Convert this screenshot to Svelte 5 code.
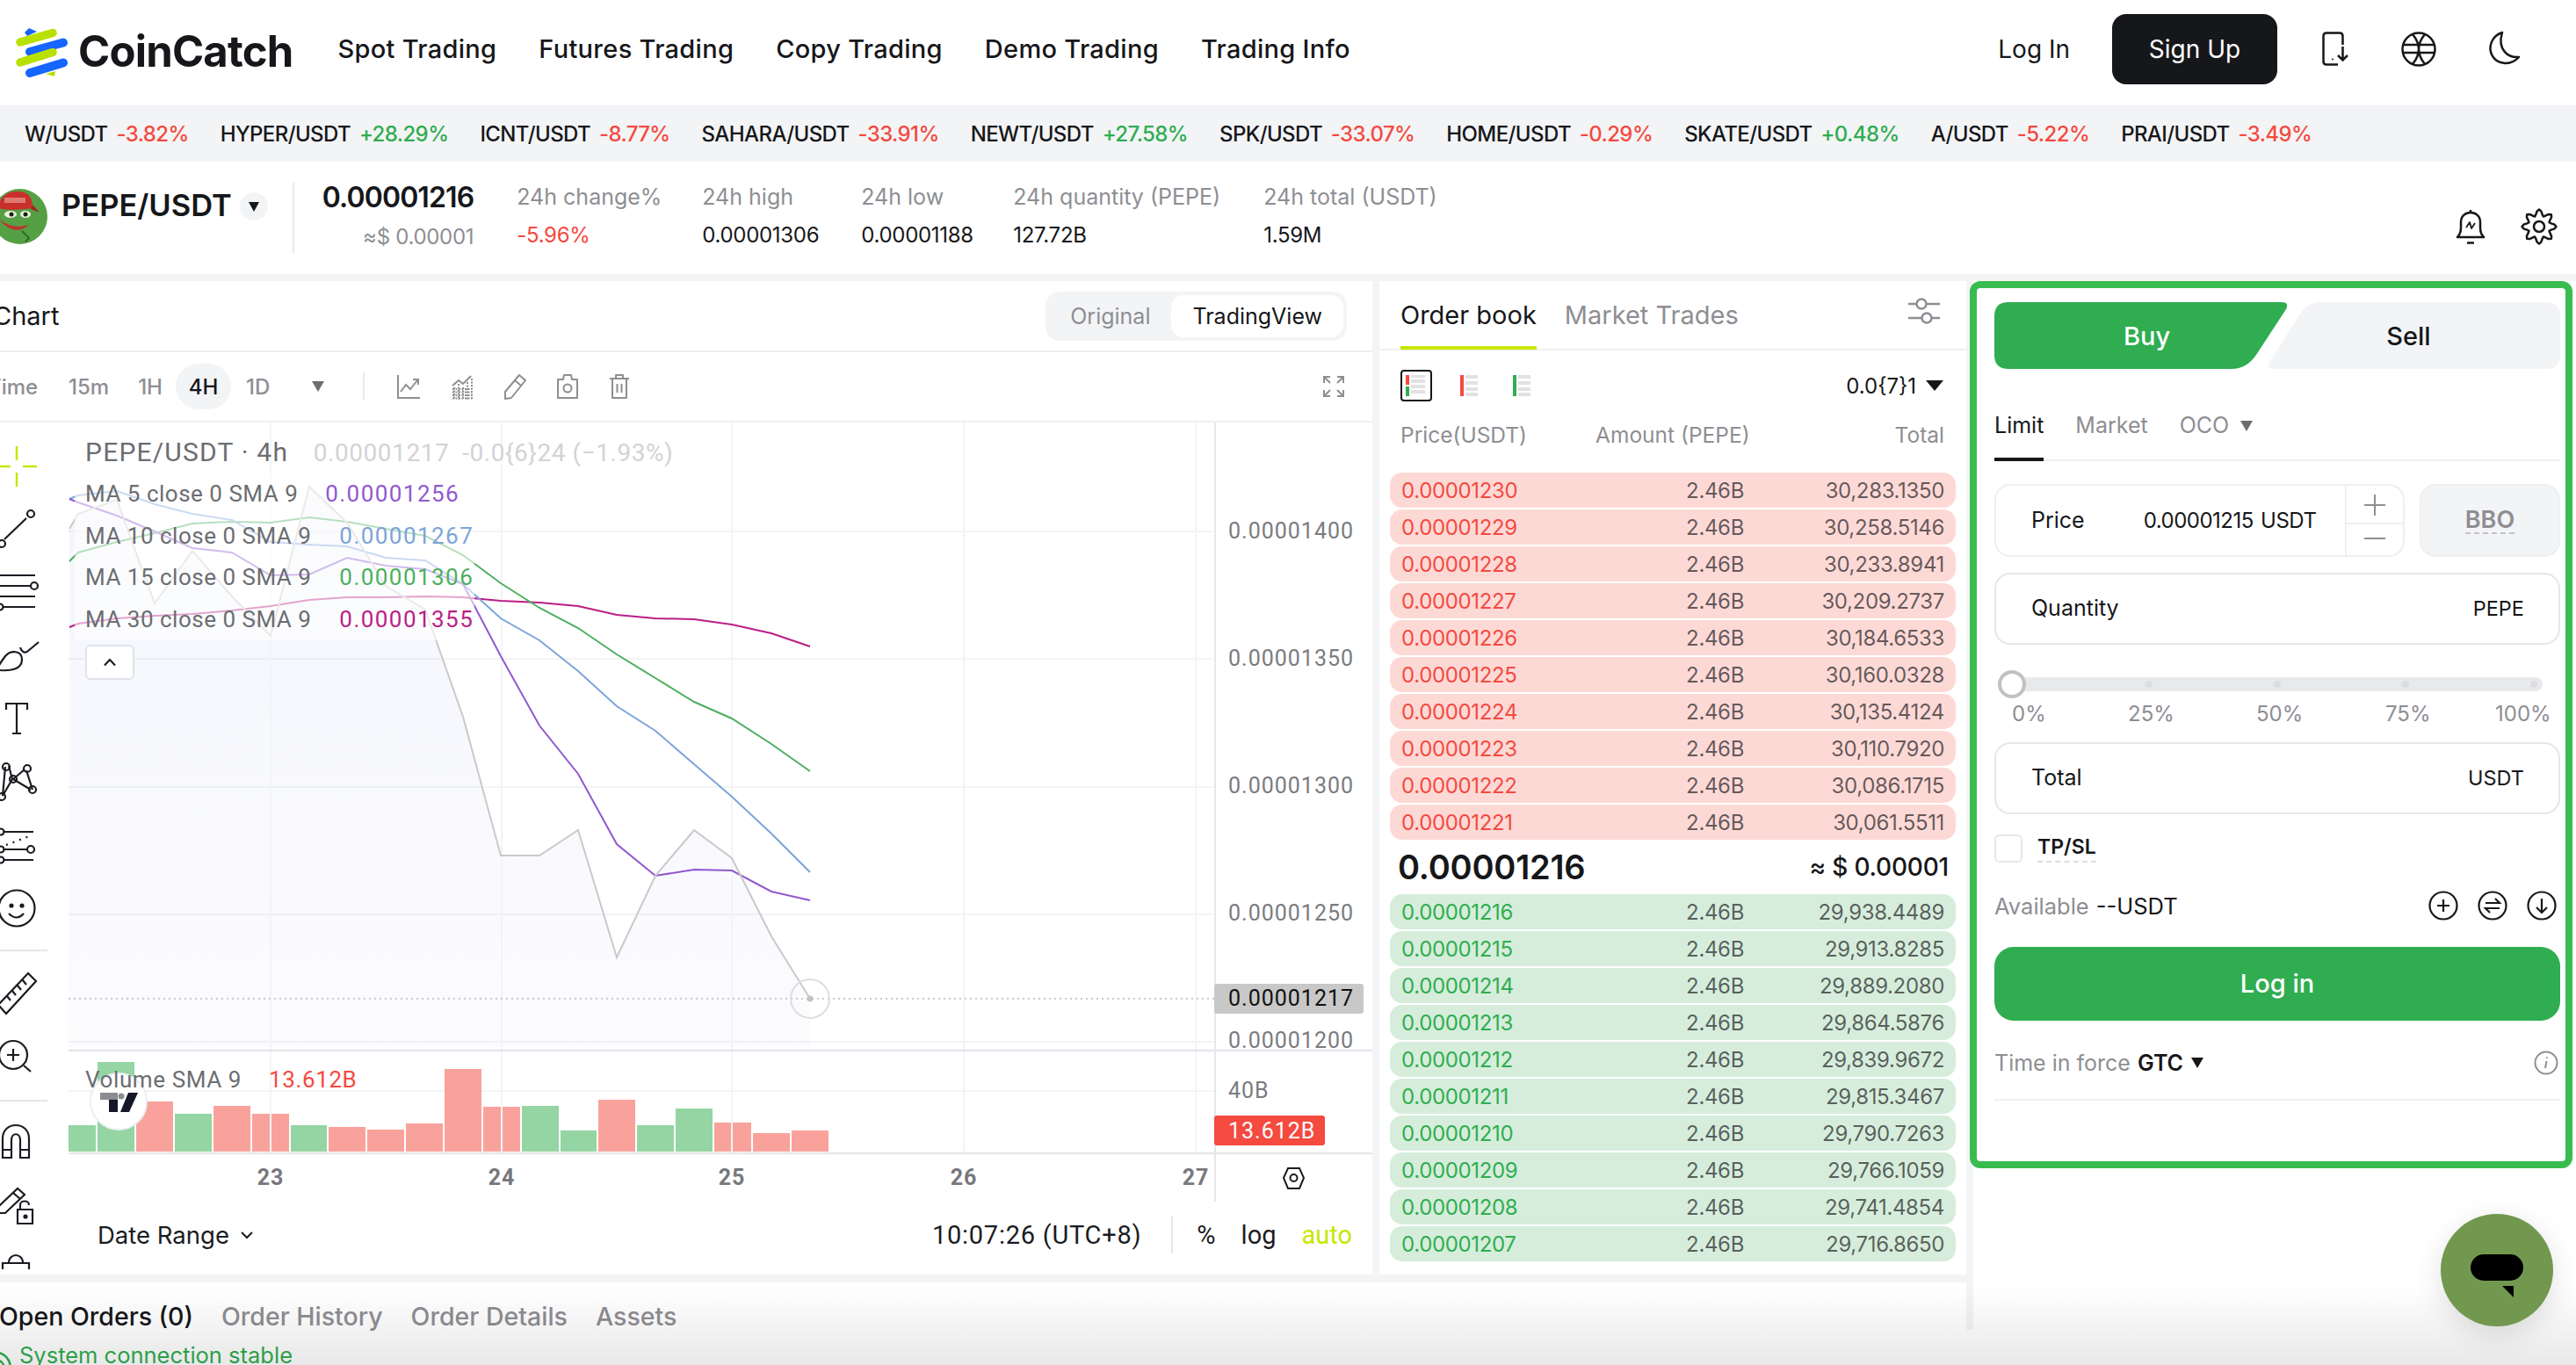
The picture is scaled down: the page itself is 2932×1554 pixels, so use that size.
<script>
  const nav = ['Spot Trading', 'Futures Trading', 'Copy Trading', 'Demo Trading', 'Trading Info']

  const ticker = [
    ['W/USDT', '-3.82%'], ['HYPER/USDT', '+28.29%'], ['ICNT/USDT', '-8.77%'], ['SAHARA/USDT', '-33.91%'],
    ['NEWT/USDT', '+27.58%'], ['SPK/USDT', '-33.07%'], ['HOME/USDT', '-0.29%'], ['SKATE/USDT', '+0.48%'],
    ['A/USDT', '-5.22%'], ['PRAI/USDT', '-3.49%']
  ]

  const stats = [
    { label: '24h high', value: '0.00001306', w: 181 },
    { label: '24h low', value: '0.00001188', w: 173 },
    { label: '24h quantity (PEPE)', value: '127.72B', w: 285 },
    { label: '24h total (USDT)', value: '1.59M', w: 200 }
  ]

  const asks = [
    ['0.00001230', '30,283.1350'], ['0.00001229', '30,258.5146'], ['0.00001228', '30,233.8941'],
    ['0.00001227', '30,209.2737'], ['0.00001226', '30,184.6533'], ['0.00001225', '30,160.0328'],
    ['0.00001224', '30,135.4124'], ['0.00001223', '30,110.7920'], ['0.00001222', '30,086.1715'],
    ['0.00001221', '30,061.5511']
  ]
  const bids = [
    ['0.00001216', '29,938.4489'], ['0.00001215', '29,913.8285'], ['0.00001214', '29,889.2080'],
    ['0.00001213', '29,864.5876'], ['0.00001212', '29,839.9672'], ['0.00001211', '29,815.3467'],
    ['0.00001210', '29,790.7263'], ['0.00001209', '29,766.1059'], ['0.00001208', '29,741.4854'],
    ['0.00001207', '29,716.8650']
  ]

  // chart series, page coordinates, oldest first
  const xs = [79, 89, 133, 176, 219, 264, 308, 352, 395, 439, 484, 527, 570, 614, 658, 702, 746, 790, 833, 878, 922]
  const closeY = [600, 583, 567, 685, 625, 677, 722, 552, 593, 665, 692, 814, 972, 972, 943, 1088, 995, 943, 975, 1064, 1135]
  const ma5 = [566, 570, 585, 603, 622, 627, 653, 652, 633, 642, 646, 663, 745, 824, 879, 959, 995, 988, 989, 1013, 1023]
  const ma10 = [566, 562, 557, 572, 583, 590, 615, 618, 620, 633, 636, 663, 702, 727, 762, 802, 830, 868, 905, 947, 991]
  const ma15 = [637, 627, 615, 605, 594, 592, 593, 587, 592, 600, 608, 630, 662, 690, 713, 743, 770, 797, 816, 845, 876]
  const ma30 = [712, 708, 702, 699, 697, 693, 688, 681, 678, 678, 677, 678, 682, 684, 688, 698, 702, 703, 709, 719, 734]

  const toPoints = (ys) => xs.map((x, i) => `${x},${ys[i]}`).join(' ')
  const closeArea = `78,1190 ${toPoints(closeY)} 922,1190`

  const lines = [
    { ys: ma30, color: '#bb1d86' },
    { ys: ma15, color: '#4caf5f' },
    { ys: ma10, color: '#7ba4db' },
    { ys: ma5, color: '#9058cf' },
    { ys: closeY, color: '#c9c9c9' }
  ]

  const vgrid = [308, 571, 833, 1097, 1361]
  const hgrid = [603, 748, 894, 1039, 1184]
  const priceLabels = [['0.00001400', 604], ['0.00001350', 749], ['0.00001300', 894], ['0.00001250', 1039], ['0.00001200', 1184]]

  const bars = [
    [78, 31, 1279, 'g'], [111, 42, 1207, 'g'], [155, 42, 1252, 'r'], [199, 42, 1266, 'g'], [243, 42, 1257, 'r'],
    [287, 42, 1266, 'r'], [331, 41, 1279, 'g'], [374, 42, 1281, 'r'], [418, 42, 1284, 'r'], [462, 42, 1277, 'r'],
    [506, 42, 1215, 'r'], [550, 42, 1258, 'r'], [594, 42, 1257, 'g'], [638, 41, 1285, 'g'], [681, 42, 1250, 'r'],
    [725, 42, 1279, 'g'], [769, 42, 1260, 'g'], [813, 42, 1276, 'r'], [857, 42, 1288, 'r'], [901, 42, 1285, 'r']
  ]

  const legend = [
    { name: 'MA 5 close 0 SMA 9', value: '0.00001256', color: '#9058cf', gap: 24 },
    { name: 'MA 10 close 0 SMA 9', value: '0.00001267', color: '#7ba4db', gap: 25 },
    { name: 'MA 15 close 0 SMA 9', value: '0.00001306', color: '#4caf5f', gap: 25 },
    { name: 'MA 30 close 0 SMA 9', value: '0.00001355', color: '#bb1d86', gap: 25 }
  ]

  const sliderMarks = ['0%', '25%', '50%', '75%', '100%']

  // 8 tooth gear outline for the settings icon
  const gear = Array.from({ length: 48 }, (_, i) => {
    const a = (i / 48) * Math.PI * 2
    const r = 16 + 3.5 * Math.cos(a * 8)
    return `${(21 + r * Math.cos(a)).toFixed(1)},${(20 + r * Math.sin(a)).toFixed(1)}`
  }).join(' ')
</script>

<div class="page">
  <header class="topbar">
    <svg class="logo" width="62" height="56" viewBox="0 0 62 56">
      <path d="M11 5 L16 0 L25 4 L14 9Z" fill="#1565ff" />
      <path d="M35 52 L46 49 L45 55Z" fill="#b8e000" />
      <path d="M6 16 L43 5.500" stroke="#b8e000" stroke-width="9.500" stroke-linecap="round" />
      <path d="M17 27 L55 16.500" stroke="#1565ff" stroke-width="10" stroke-linecap="round" />
      <path d="M6 39 L43 27.500" stroke="#b8e000" stroke-width="9.500" stroke-linecap="round" />
      <path d="M17 51 L55 39.500" stroke="#1565ff" stroke-width="10" stroke-linecap="round" />
    </svg>
    <span class="brand">CoinCatch</span>
    <nav class="nav">
      {#each nav as item}
        <span>{item}</span>
      {/each}
    </nav>
    <div class="top-right">
      <span class="login">Log In</span>
      <span class="signup">Sign Up</span>
      <svg class="ico-phone" width="32" height="42" viewBox="0 0 32 42" fill="none" stroke="#16171a" stroke-width="2.500">
        <path d="M19 38.500 H6 Q2.500 38.500 2.500 35 V6 Q2.500 2.500 6 2.500 H21 Q24.500 2.500 24.500 6 V16" />
        <path d="M24.500 18 V33 M19 28 L24.500 33.500 L30 28" />
        <circle cx="13" cy="32.500" r="1" fill="#16171a" stroke="none" />
      </svg>
      <svg class="ico-globe" width="42" height="42" viewBox="0 0 42 42" fill="none" stroke="#16171a" stroke-width="2.500">
        <circle cx="21" cy="21" r="18.500" />
        <path d="M3 16 H39 M3 25 H39 M14 4 Q28 21 14 38 M28 4 Q14 21 28 38" />
      </svg>
      <svg class="ico-moon" width="44" height="42" viewBox="0 0 44 42" fill="none" stroke="#16171a" stroke-width="2.500" stroke-linejoin="round">
        <path d="M20 2 C8 6 4 18 8 27 C13 38 29 41 39 30 C27 31 14 22 20 2Z" />
      </svg>
    </div>
  </header>

  <div class="ticker">
    {#each ticker as [sym, chg]}
      <span class="tick">{sym} <em class={chg[0] === '+' ? 'up' : 'down'}>{chg}</em></span>
    {/each}
  </div>

  <div class="pairbar">
    <svg class="pepe" width="63" height="63" viewBox="0 0 63 63">
      <circle cx="31.500" cy="31.500" r="31.500" fill="#55a044" />
      <path d="M7 22 C8 6 24 0 36 4 C45 6 46 16 46 22 C32 24 18 25 7 22Z" fill="#c9302c" />
      <path d="M46 18 L54 27 L44 23Z" fill="#a92422" />
      <rect x="14" y="10" width="24" height="6" fill="#e58c84" opacity="0.8" />
      <path d="M8 34 C20 45 36 44 42 40 C36 50 18 50 8 34Z" fill="#b63a2e" />
      <ellipse cx="21" cy="29" rx="7" ry="4" fill="#e9f0df" />
      <ellipse cx="38" cy="29" rx="6" ry="4" fill="#e9f0df" />
      <circle cx="22" cy="29" r="2.500" fill="#17240f" />
      <circle cx="38" cy="29" r="2.500" fill="#17240f" />
      <path d="M34 48 L42 56 L38 60" fill="none" stroke="#2f6b25" stroke-width="2" />
    </svg>
    <span class="pair-name">PEPE/USDT</span>
    <span class="pair-drop"></span>
    <span class="pair-div"></span>
    <div class="pair-price">
      <strong>0.00001216</strong>
      <span>≈$ 0.00001</span>
    </div>
    <div class="stat first">
      <span>24h change%</span>
      <b class="down">-5.96%</b>
    </div>
    {#each stats as s}
      <div class="stat" style="width:{s.w}px">
        <span>{s.label}</span>
        <b>{s.value}</b>
      </div>
    {/each}
    <div class="pair-icons">
      <svg width="38" height="42" viewBox="0 0 38 42" fill="none" stroke="#16171a" stroke-width="2.500" stroke-linejoin="round">
        <path d="M4 33 Q8 29 8 22 V16 C8 9 13 5 19 5 C25 5 30 9 30 16 V22 Q30 29 34 33 Z" />
        <path d="M19 2 V5 M15 39.500 H23" />
        <path d="M14 22 L18 16 L20 23 L24 17" stroke-width="1.800" />
      </svg>
      <svg width="42" height="42" viewBox="0 0 42 40" fill="none" stroke="#16171a" stroke-width="2.500" stroke-linejoin="round">
        <polygon points={gear} />
        <circle cx="21" cy="20" r="6" />
      </svg>
    </div>
  </div>

  <div class="body">
    <div class="left">
      <div class="top-row">
        <section class="chart">
          <div class="chart-head">
            <span class="chart-title">Chart</span>
            <div class="toggle">
              <span>Original</span>
              <span class="on">TradingView</span>
            </div>
          </div>
          <div class="tv-toolbar">
            <span class="iv time">Time</span>
            <span class="iv m15">15m</span>
            <span class="iv h1">1H</span>
            <span class="iv active">4H</span>
            <span class="iv d1">1D</span>
            <span class="tri"></span>
            <span class="tb-div"></span>
            <svg class="tb-ico first" width="28" height="30" viewBox="0 0 28 30" fill="none" stroke="#8e8e93" stroke-width="2">
              <path d="M2 2 V28 H27 M5 21 L11 13 L16 18 L24 8 M19 7 H25 V13" />
            </svg>
            <svg class="tb-ico" width="26" height="30" viewBox="0 0 26 30" fill="none" stroke="#8e8e93" stroke-width="2">
              <path d="M2 14 L9 8 L14 12 L23 3" />
              <path d="M2 18 H24 M2 21.500 H24 M2 25 H24 M2 28.500 H24 M4 16 V30 M9 12 V30 M14 16 V30 M19 10 V30 M24 6 V30" stroke-dasharray="2 1.500" />
            </svg>
            <svg class="tb-ico" width="26" height="30" viewBox="0 0 26 30" fill="none" stroke="#8e8e93" stroke-width="2" stroke-linejoin="round">
              <path d="M18 2 L25 8 L9 28 L2 29 L2 21Z M13 8 L20 14" />
            </svg>
            <svg class="tb-ico" width="26" height="30" viewBox="0 0 26 30" fill="none" stroke="#8e8e93" stroke-width="2" stroke-linejoin="round">
              <path d="M2 7 H8 L9 2 H17 L18 7 H24 V28 H2Z" />
              <circle cx="13" cy="17" r="4.500" />
            </svg>
            <svg class="tb-ico" width="24" height="30" viewBox="0 0 24 30" fill="none" stroke="#8e8e93" stroke-width="2" stroke-linejoin="round">
              <path d="M1 6 H23 M8 6 V2 H16 V6 M4 6 V28 H20 V6 M9.500 12 V22 M14.500 12 V22" />
            </svg>
            <svg class="expand" width="24" height="24" viewBox="0 0 24 24" fill="none" stroke="#8e8e93" stroke-width="2">
              <path d="M1 8 V1 H8 M1 1 L8 8 M23 8 V1 H16 M23 1 L16 8 M1 16 V23 H8 M1 23 L8 16 M23 16 V23 H16 M23 23 L16 16" />
            </svg>
          </div>
          <div class="chart-main">
            <svg class="draw-tools" width="78" height="964" viewBox="0 479 78 964" fill="none" stroke="#1b1c22" stroke-width="2.200">
              <path d="M19 506 V522 M19 536 V552 M-2 529 H12 M26 529 H42" stroke="#c8e600" stroke-width="2.500" />
              <path d="M5 612 L30 588" /><circle cx="35" cy="583" r="4" /><circle cx="2" cy="617" r="4" />
              <path d="M-2 653 H40 M-2 665 H34 M-2 677 H40 M4 689 H40" /><circle cx="39" cy="665" r="4" /><circle cx="0" cy="689" r="3.500" />
              <path d="M0 761 C12 762 25 760 25 749 C25 738 12 738 6 745 C3 749 0 753 -2 757" />
              <path d="M23 735 C25 741 29 742 32 739 L44 729" />
              <path d="M7 806 V799 H31 V806 M19 799 V833 M14 833 H24" />
              <path d="M6 871 L3 904 M10 870 L14 885 L3 904 M15 885 L28 874 M30 875 L37 897 M15 885 L35 897" />
              <circle cx="7" cy="871" r="4" /><circle cx="15" cy="885" r="4" /><circle cx="31" cy="873" r="4" /><circle cx="37" cy="897" r="4" /><circle cx="2" cy="905" r="4" />
              <path d="M5 945 H38 M5 965 H31 M5 977 H38" /><circle cx="1" cy="945" r="3.500" /><circle cx="1" cy="965" r="3.500" /><circle cx="1" cy="977" r="3.500" /><circle cx="35" cy="965" r="4" />
              <path d="M7 960 L36 949" stroke-dasharray="2 6" />
              <circle cx="19" cy="1032" r="20.500" /><circle cx="13" cy="1029" r="1.500" fill="#1b1c22" /><circle cx="25" cy="1029" r="1.500" fill="#1b1c22" />
              <path d="M10 1038 Q19 1047 27 1038" />
              <path d="M0 1080 H54 M0 1251 H54" stroke="#e4e5e8" stroke-width="2" />
              <path d="M-2 1142 L32 1106 L41 1115 L7 1152 Z M8 1132 L12 1137 M14 1126 L18 1131 M20 1120 L24 1125 M26 1114 L30 1119" />
              <circle cx="15" cy="1199" r="16" /><path d="M15 1192 V1206 M8 1199 H22 M27 1211 L35 1218" />
              <path d="M3 1316 V1294 C3 1274 33 1274 33 1294 V1316 H23 V1296 C23 1287 13 1287 13 1296 V1316 Z M3 1307 H13 M23 1307 H33" />
              <path d="M-2 1372 L20 1351 L28 1358 L6 1379 H-2 Z M15 1356 L23 1363" />
              <path d="M20 1375 H37 V1391 H20 Z M23 1375 V1370 C23 1364 33 1364 33 1370" /><circle cx="29" cy="1383" r="1.500" fill="#1b1c22" />
              <path d="M3 1443 V1436 H33 V1443 M10 1436 C10 1424 26 1424 26 1436" />
            </svg>
            <div class="stage-col">
              <div class="stage">
                <svg width="1484" height="888" viewBox="78 479 1484 888">
                  <defs>
                    <linearGradient id="areaFill" x1="0" y1="0" x2="0" y2="1">
                      <stop offset="0" stop-color="#7f8fe0" stop-opacity="0.08" />
                      <stop offset="1" stop-color="#7f8fe0" stop-opacity="0.03" />
                    </linearGradient>
                  </defs>
                  {#each hgrid as y}
                    <line x1="78" x2="1383" y1={y} y2={y} class="grid" />
                  {/each}
                  <line x1="78" x2="1383" y1="1240" y2="1240" class="grid" />
                  <polygon points={closeArea} fill="url(#areaFill)" />
                  {#each bars as [x, w, top, side]}
                    <rect {x} y={top} width={w} height={1309 - top} fill={side === 'g' ? '#94d5a3' : '#f9a29c'} />
                  {/each}
                  {#each vgrid as x}
                    <line x1={x} x2={x} y1="479" y2="1310" class="grid" />
                  {/each}
                  <line x1="78" x2="1383" y1="1135" y2="1135" stroke="#c9c9c9" stroke-width="2" stroke-dasharray="2 4" />
                  {#each lines as line}
                    <polyline points={toPoints(line.ys)} fill="none" stroke={line.color} stroke-width="2" />
                  {/each}
                  <circle cx="922" cy="1135" r="22" fill="none" stroke="#dedede" stroke-width="2" />
                  <circle cx="922" cy="1135" r="3.500" fill="#c4c4c4" />

                  <line x1="78" x2="1562" y1="1194" y2="1194" stroke="#e3e6ec" stroke-width="2.500" />
                  <line x1="78" x2="1562" y1="1311" y2="1311" stroke="#e6e7ea" stroke-width="2.500" />
                  <line x1="1383" x2="1383" y1="479" y2="1366" stroke="#e6e7ea" stroke-width="2" />

                  <rect x="1382" y="1118" width="170" height="34" rx="3" fill="#c8c8c8" />
                  <rect x="1382" y="1268" width="126" height="34" rx="3" fill="#f44a40" />
                  {#each priceLabels as [txt, y]}
                    <text x="1398" y={y + 7} class="axis">{txt}</text>
                  {/each}
                  <text x="1398" y="1143" class="axis dark">0.00001217</text>
                  <text x="1398" y="1248" class="axis">40B</text>
                  <text x="1398" y="1294" class="axis light">13.612B</text>
                  {#each [['23', 308], ['24', 571], ['25', 833], ['26', 1097], ['27', 1361]] as [d, x]}
                    <text x={x} y="1347" class="day">{d}</text>
                  {/each}

                  <path d="M1463 1339 L1468 1328 H1481 L1486 1339 L1481 1351 H1468 Z" transform="translate(-2 0)" fill="none" stroke="#1b1c22" stroke-width="2" />
                  <circle cx="1472.500" cy="1339" r="4" fill="none" stroke="#1b1c22" stroke-width="2" />

                  <circle cx="135" cy="1252" r="32" fill="#fff" stroke="#eceef1" stroke-width="2" />
                  <rect x="114" y="1242" width="20" height="8" fill="#8a8c91" />
                  <rect x="124" y="1250" width="10" height="14" fill="#16182a" />
                  <circle cx="138" cy="1246" r="3.500" fill="#8a8c91" />
                  <path d="M146 1242 H157 L147 1264 H137Z" fill="#16182a" />
                </svg>

                <div class="legend">
                  <div class="legend-title">
                    <span>PEPE/USDT · 4h</span>
                    <span class="ohlc">0.00001217&nbsp; -0.0{'{'}6{'}'}24 (−1.93%)</span>
                  </div>
                  {#each legend as row}
                    <div class="legend-row">
                      <span>{row.name}</span>
                      <span class="legend-val" style="color:{row.color}; margin-left:{row.gap}px">{row.value}</span>
                    </div>
                  {/each}
                  <span class="collapse">
                    <svg width="16" height="10" viewBox="0 0 16 10" fill="none" stroke="#1b1c22" stroke-width="2.200"><path d="M2 8.500 L8 2 L14 8.500" /></svg>
                  </span>
                </div>
                <div class="vol-legend">
                  <span>Volume SMA 9</span>
                  <span class="down">13.612B</span>
                </div>
              </div>
              <div class="chart-foot">
                <span class="range">Date Range</span>
                <svg class="range-arrow" width="16" height="10" viewBox="0 0 16 10" fill="none" stroke="#1b1c22" stroke-width="2"><path d="M2 2 L8 8 L14 2" /></svg>
                <span class="clock">10:07:26 (UTC+8)</span>
                <span class="foot-div"></span>
                <span class="foot-opt">%</span>
                <span class="foot-opt">log</span>
                <span class="foot-opt auto">auto</span>
              </div>
            </div>
          </div>
        </section>

        <section class="book">
          <div class="book-tabs">
            <span class="book-tab on">Order book</span>
            <span class="book-tab">Market Trades</span>
            <svg class="book-filter" width="38" height="30" viewBox="0 0 38 30" fill="none" stroke="#8e8e93" stroke-width="2.500">
              <path d="M1 7 H10 M22 7 H37 M1 23 H16 M28 23 H37" /><circle cx="16" cy="7" r="5.500" /><circle cx="22" cy="23" r="5.500" />
            </svg>
          </div>
          <div class="book-tools">
            <span class="view-box">
              <svg width="24" height="24" viewBox="0 0 24 24">
                <rect x="0" y="0" width="4" height="11" fill="#f44a40" /><rect x="0" y="13" width="4" height="11" fill="#2fad50" />
                <path d="M6 1 H22 M6 7 H22 M6 13 H22 M6 19 H22" stroke="#e2e2e4" stroke-width="4" />
              </svg>
            </span>
            <svg class="view-ico" width="20" height="24" viewBox="0 0 20 24">
              <rect width="4" height="24" fill="#f44a40" /><path d="M6 2 H20 M6 9 H20 M6 16 H20 M6 22 H20" stroke="#e2e2e4" stroke-width="4" />
            </svg>
            <svg class="view-ico" width="20" height="24" viewBox="0 0 20 24">
              <rect width="4" height="24" fill="#2fad50" /><path d="M6 2 H20 M6 9 H20 M6 16 H20 M6 22 H20" stroke="#e2e2e4" stroke-width="4" />
            </svg>
            <span class="precision">0.0{'{'}7{'}'}1</span>
            <span class="tri black"></span>
          </div>
          <div class="book-head">
            <span>Price(USDT)</span>
            <span class="amt">Amount (PEPE)</span>
            <span class="tot">Total</span>
          </div>
          <div class="rows">
            {#each asks as [p, t]}
              <div class="row ask"><span class="p">{p}</span><span class="a">2.46B</span><span class="t">{t}</span></div>
            {/each}
          </div>
          <div class="mid">
            <strong>0.00001216</strong>
            <span>≈ $ 0.00001</span>
          </div>
          <div class="rows">
            {#each bids as [p, t]}
              <div class="row bid"><span class="p">{p}</span><span class="a">2.46B</span><span class="t">{t}</span></div>
            {/each}
          </div>
        </section>
      </div>
      <div class="orders">
        <div class="order-tabs">
          <span class="on">Open Orders (0)</span>
          <span>Order History</span>
          <span>Order Details</span>
          <span>Assets</span>
        </div>
        <div class="conn">
          <svg width="14" height="22" viewBox="0 0 14 22" fill="none" stroke="#2fad50" stroke-width="2.500">
            <path d="M-10 4 C4 4 11 10 12 22 M-10 12 C0 12 4 16 5 22" />
          </svg>
          <span>System connection stable</span>
        </div>
      </div>
    </div>

    <aside class="right">
      <div class="trade">
        <div class="sides">
          <span class="buy">Buy</span>
          <span class="sell">Sell</span>
        </div>
        <div class="order-type">
          <span class="on">Limit</span>
          <span>Market</span>
          <span class="oco">OCO <i class="tri small"></i></span>
        </div>
        <div class="price-line">
          <div class="field price">
            <span class="f-label">Price</span>
            <span class="f-val">0.00001215 USDT</span>
            <div class="steps">
              <svg width="26" height="26" viewBox="0 0 26 26" stroke="#8e8e93" stroke-width="2"><path d="M13 1 V25 M1 13 H25" /></svg>
              <svg width="26" height="4" viewBox="0 0 26 4" stroke="#8e8e93" stroke-width="2"><path d="M1 2 H25" /></svg>
            </div>
          </div>
          <div class="bbo"><span>BBO</span></div>
        </div>
        <div class="field wide">
          <span class="f-label">Quantity</span>
          <span class="f-unit">PEPE</span>
        </div>
        <div class="slider">
          <div class="track">
            <i></i><i></i><i></i><i></i>
          </div>
          <span class="thumb"></span>
        </div>
        <div class="marks">
          {#each sliderMarks as m}
            <span>{m}</span>
          {/each}
        </div>
        <div class="field wide total">
          <span class="f-label">Total</span>
          <span class="f-unit">USDT</span>
        </div>
        <div class="tpsl">
          <span class="check"></span>
          <span class="tp">TP/SL</span>
        </div>
        <div class="avail">
          <span class="muted">Available</span>
          <span>--USDT</span>
          <div class="avail-icons">
            <svg width="34" height="34" viewBox="0 0 34 34" fill="none" stroke="#16171a" stroke-width="2.200">
              <circle cx="17" cy="17" r="15.500" /><path d="M17 10 V24 M10 17 H24" />
            </svg>
            <svg width="34" height="34" viewBox="0 0 34 34" fill="none" stroke="#16171a" stroke-width="2.200">
              <circle cx="17" cy="17" r="15.500" /><path d="M9 14 H25 L20 9 M25 20 H9 L14 25" />
            </svg>
            <svg width="34" height="34" viewBox="0 0 34 34" fill="none" stroke="#16171a" stroke-width="2.200">
              <circle cx="17" cy="17" r="15.500" /><path d="M17 9 V25 M11 19 L17 25 L23 19" />
            </svg>
          </div>
        </div>
        <div class="login-btn">Log in</div>
        <div class="tif">
          <span class="muted">Time in force</span>
          <span class="gtc">GTC</span>
          <span class="tri black tiny"></span>
          <svg class="info" width="28" height="28" viewBox="0 0 28 28" fill="none" stroke="#8e8e93" stroke-width="2">
            <circle cx="14" cy="14" r="12.500" /><path d="M14.500 12 L13 20 M14.800 7.500 V9" />
          </svg>
        </div>
      </div>
    </aside>
  </div>

  <div class="fade"></div>
  <div class="chat">
    <span class="pill"></span>
    <svg width="14" height="14" viewBox="0 0 14 14"><path d="M0 0 H13 V13Z" fill="#000" /></svg>
  </div>
</div>

<style>
  :global(body) {
    margin: 0;
    background: #fff;
  }

  .page {
    position: relative;
    width: 2932px;
    height: 1554px;
    overflow: hidden;
    background: #f3f4f6;
    color: #16171a;
    font-family: Inter, 'Noto Sans', sans-serif;
    font-size: 24px;
  }

  .down { color: #f44a40; }
  .up { color: #2fad50; }
  .muted { color: #8e8e93; }

  .tri {
    display: inline-block;
    width: 0;
    height: 0;
    border-left: 7px solid transparent;
    border-right: 7px solid transparent;
    border-top: 12px solid #6d6e72;
  }
  .tri.black {
    border-left-width: 10px;
    border-right-width: 10px;
    border-top: 12px solid #16171a;
  }

  /* header */
  .topbar {
    display: flex;
    align-items: center;
    height: 120px;
    padding-left: 17px;
    background: #fff;
  }
  .brand {
    margin-left: 10px;
    margin-top: -4px;
    font-size: 49px;
    font-weight: 700;
    letter-spacing: -0.800px;
    color: #16171a;
  }
  .nav {
    display: flex;
    gap: 48px;
    margin-left: 51px;
    margin-top: -10px;
    font-size: 29px;
    font-weight: 500;
    letter-spacing: 0.300px;
  }
  .top-right {
    display: flex;
    align-items: center;
    margin-left: auto;
    margin-top: -8px;
  }
  .login { margin-right: 48px; font-size: 28px; }
  .signup {
    display: flex;
    align-items: center;
    justify-content: center;
    width: 188px;
    height: 80px;
    border-radius: 16px;
    background: #16171a;
    color: #fff;
    font-size: 28px;
  }
  .ico-phone { margin-left: 50px; }
  .ico-globe { margin-left: 58px; }
  .ico-moon { margin-left: 54px; margin-right: 60px; }

  /* ticker */
  .ticker {
    display: flex;
    align-items: center;
    gap: 36px;
    height: 64px;
    padding-left: 28px;
    background: #f3f4f6;
    font-size: 24px;
    font-weight: 500;
    letter-spacing: -0.600px;
    white-space: nowrap;
  }
  .tick em { font-style: normal; margin-left: 4px; }

  /* pair bar */
  .pairbar {
    display: flex;
    align-items: center;
    height: 128px;
    background: #fff;
    margin-bottom: 8px;
    white-space: nowrap;
  }
  .pepe { margin-left: -9px; margin-top: -4px; flex: none; }
  .pair-name { margin-left: 16px; font-size: 34.500px; font-weight: 600; margin-top: -30px; }
  .pair-drop {
    position: relative;
    width: 32px;
    height: 32px;
    margin-left: 9px;
    margin-top: -26px;
    border-radius: 50%;
    background: #f3f4f6;
  }
  .pair-drop::after {
    content: '';
    position: absolute;
    left: 10px;
    top: 11px;
    border-left: 6px solid transparent;
    border-right: 6px solid transparent;
    border-top: 11px solid #16171a;
  }
  .pair-div {
    width: 2px;
    height: 80px;
    margin-left: 28px;
    background: #e8e9eb;
  }
  .pair-price {
    display: flex;
    flex-direction: column;
    align-items: flex-end;
    gap: 17px;
    margin-left: 32px;
    margin-top: -6px;
  }
  .pair-price strong { font-size: 32px; font-weight: 600; letter-spacing: -0.900px; line-height: 32px; }
  .pair-price span { color: #8e8e93; font-size: 24px; letter-spacing: -0.300px; line-height: 24px; }
  .stat {
    display: flex;
    flex-direction: column;
    gap: 16px;
    font-size: 24px;
    margin-top: -4px;
    flex: none;
  }
  .stat span { color: #8e8e93; font-size: 25px; line-height: 28px; }
  .stat b { font-weight: 400; letter-spacing: -0.300px; line-height: 28px; }
  .stat.first { margin-left: 49px; width: 211px; }
  .pair-icons {
    display: flex;
    gap: 38px;
    margin-left: auto;
    margin-right: 21px;
    margin-top: 20px;
  }

  /* main layout */
  .body {
    display: flex;
    height: 1234px;
  }
  .left {
    display: flex;
    flex-direction: column;
    width: 2238px;
    flex: none;
    gap: 9px;
  }
  .top-row {
    display: flex;
    gap: 8px;
    height: 1131px;
  }

  /* chart */
  .chart {
    width: 1562px;
    background: #fff;
    overflow: hidden;
    flex: none;
  }
  .chart-head {
    display: flex;
    align-items: center;
    height: 79px;
    border-bottom: 2px solid #eeeff1;
  }
  .chart-title { margin-left: -8px; font-size: 29px; }
  .toggle {
    display: flex;
    align-items: center;
    margin-left: auto;
    margin-right: 29px;
    height: 56px;
    padding: 4px;
    border-radius: 16px;
    background: #f3f4f6;
    box-sizing: border-box;
    font-size: 25px;
    color: #8e8e93;
  }
  .toggle span { padding: 0 24px; line-height: 48px; }
  .toggle .on {
    padding: 0 24px;
    border-radius: 14px;
    background: #fff;
    color: #16171a;
  }
  .tv-toolbar {
    display: flex;
    align-items: center;
    height: 78px;
    border-bottom: 2px solid #eeeff1;
    color: #8e8e93;
    font-weight: 500;
    position: relative;
  }
  .iv { font-size: 24px; }
  .time { margin-left: -14px; width: 92px; }
  .h1 { margin-left: 33px; }
  .active {
    display: flex;
    align-items: center;
    justify-content: center;
    width: 63px;
    height: 52px;
    margin-left: 15px;
    border-radius: 26px;
    background: #f3f4f6;
    color: #16171a;
  }
  .d1 { margin-left: 17px; }
  .tv-toolbar .tri { margin-left: 48px; }
  .tb-div {
    width: 2px;
    height: 32px;
    margin-left: 44px;
    background: #e8e9eb;
  }
  .tb-ico { margin-left: 34px; }
  .tb-ico.first { margin-left: 36px; }
  .expand { margin-left: auto; margin-right: 32px; }

  .chart-main {
    display: flex;
    height: 972px;
  }
  .draw-tools {
    flex: none;
    overflow: hidden;
  }
  .stage-col {
    display: flex;
    flex-direction: column;
    width: 1484px;
  }
  .stage {
    position: relative;
    height: 888px;
    flex: none;
  }
  .stage svg { display: block; }
  .grid { stroke: #f3f4f6; stroke-width: 2; }
  .axis {
    font-family: Roboto, sans-serif;
    font-size: 25px;
    letter-spacing: 1px;
    fill: #7a7b80;
  }
  .axis.dark { fill: #111; }
  .axis.light { fill: #fff; }
  .day {
    font-family: Roboto, sans-serif;
    font-size: 25px;
    font-weight: 700;
    letter-spacing: 1px;
    fill: #77787c;
    text-anchor: middle;
  }
  .legend {
    position: absolute;
    left: 19px;
    top: 15px;
    font-family: Roboto, sans-serif;
    font-size: 26px;
    letter-spacing: 0.500px;
    color: #6b6d72;
    white-space: nowrap;
  }
  .legend-title {
    font-size: 30px;
    line-height: 38px;
    margin-bottom: 4px;
    letter-spacing: 1.200px;
  }
  .ohlc {
    margin-left: 20px;
    font-size: 28px;
    color: #d2d3d6;
    letter-spacing: 0.550px;
  }
  .legend-row {
    line-height: 47.500px;
    background: rgba(255, 255, 255, 0.6);
    margin-left: -12px;
    padding-left: 12px;
    width: 443px;
  }
  .legend-val { letter-spacing: 1.450px; }
  .collapse {
    display: flex;
    align-items: center;
    justify-content: center;
    box-sizing: border-box;
    width: 56px;
    height: 40px;
    margin-top: 5px;
    border: 2px solid #e0e3eb;
    border-radius: 6px;
    background: #fff;
  }
  .vol-legend {
    position: absolute;
    left: 19px;
    top: 731px;
    display: flex;
    gap: 31px;
    font-family: Roboto, sans-serif;
    font-size: 26px;
    letter-spacing: 0.600px;
    line-height: 34px;
    color: #6b6d72;
  }
  .vol-legend .down { color: #f44a40; }
  .chart-foot {
    display: flex;
    align-items: center;
    height: 74px;
    font-family: Roboto, sans-serif;
    font-size: 29px;
    color: #1b1c22;
  }
  .range { margin-left: 33px; font-family: Inter, sans-serif; font-size: 27.500px; }
  .range-arrow { margin-left: 12px; }
  .clock { margin-left: auto; letter-spacing: 0.750px; }
  .foot-div {
    width: 2px;
    height: 42px;
    margin: 0 27px 0 34px;
    background: #e3e6ec;
  }
  .foot-opt { margin-right: 29px; }
  .foot-opt.auto { margin-right: 23px; color: #c8e600; }

  /* order book */
  .book {
    width: 668px;
    flex: none;
    background: #fff;
  }
  .book-tabs {
    display: flex;
    align-items: stretch;
    height: 77px;
    padding-left: 24px;
    border-bottom: 2px solid #eeeff1;
    box-sizing: content-box;
    font-size: 29px;
    color: #8e8e93;
  }
  .book-tab { padding-top: 21px; box-sizing: border-box; }
  .book-tab + .book-tab { margin-left: 32px; }
  .book-tab.on {
    color: #16171a;
    border-bottom: 4px solid #c8e600;
    margin-bottom: -1px;
  }
  .book-filter { margin-left: auto; margin-right: 29px; margin-top: 19px; }
  .book-tools {
    display: flex;
    align-items: center;
    height: 80px;
    padding-left: 24px;
  }
  .view-box {
    display: flex;
    align-items: center;
    justify-content: center;
    box-sizing: border-box;
    width: 36px;
    height: 36px;
    border: 2px solid #16171a;
    border-radius: 4px;
    margin-right: 32px;
  }
  .view-ico { margin-right: 40px; }
  .precision { margin-left: auto; margin-right: 11px; }
  .book-tools .tri { margin-right: 26px; }
  .book-head {
    display: flex;
    height: 32px;
    margin-bottom: 27px;
    padding-left: 24px;
    line-height: 32px;
    color: #8e8e93;
    font-size: 24.500px;
  }
  .amt { margin-left: 78px; }
  .tot { margin-left: auto; margin-right: 25px; }
  .rows {
    display: flex;
    flex-direction: column;
    gap: 2px;
    margin: 0 12px;
  }
  .row {
    display: grid;
    grid-template-columns: auto 1fr 228px;
    align-items: center;
    height: 40px;
    padding: 0 13px;
    border-radius: 14px;
    font-size: 24px;
    letter-spacing: -0.350px;
  }
  .ask { background: #fdd9d6; }
  .bid { background: #d6eddb; }
  .ask .p { color: #f44a40; }
  .bid .p { color: #2fad50; }
  .a, .t { color: rgba(22, 23, 26, 0.68); text-align: right; }
  .mid {
    display: flex;
    align-items: center;
    justify-content: space-between;
    height: 62px;
    padding: 0 20px 0 21px;
  }
  .mid strong { font-size: 38px; font-weight: 600; letter-spacing: -0.200px; }
  .mid span { font-size: 28px; font-weight: 500; letter-spacing: -0.200px; }

  /* orders strip */
  .orders {
    flex: 1;
    background: #fff;
    overflow: hidden;
  }
  .order-tabs {
    display: flex;
    gap: 32px;
    height: 56px;
    padding-top: 21px;
    font-size: 28.500px;
    color: #8e8e93;
    font-weight: 500;
    box-sizing: content-box;
    margin-left: -1px;
  }
  .order-tabs .on { color: #16171a; }
  .conn {
    display: flex;
    align-items: center;
    gap: 8px;
    margin-top: -10px;
    color: #2fad50;
    font-size: 25.500px;
  }
  .conn svg { margin-top: 6px; }

  /* trade panel */
  .right {
    position: relative;
    flex: 1;
    padding: 0 4px;
    background: #fff;
  }
  .right::before {
    content: '';
    position: absolute;
    left: 0;
    top: 0;
    width: 8px;
    height: 1194px;
    background: #f3f4f6;
  }
  .trade {
    position: relative;
    box-sizing: border-box;
    height: 1010px;
    padding: 16px 6px 0 20px;
    border: 8px solid #39bc4f;
    border-radius: 12px;
    background: #fff;
  }
  .sides {
    position: relative;
    height: 76px;
  }
  .buy, .sell {
    position: absolute;
    top: 0;
    display: flex;
    align-items: center;
    justify-content: center;
    box-sizing: border-box;
    width: 333px;
    height: 76px;
    font-size: 29px;
    font-weight: 500;
  }
  .buy {
    left: 0;
    padding-left: 14px;
    background: #2fad50;
    color: #fff;
    clip-path: path('M16 0 H327 Q336 0 332 8 L298 60 Q287 76 270 76 H16 Q0 76 0 60 V16 Q0 0 16 0 Z');
  }
  .sell {
    left: 311px;
    padding-right: 12px;
    background: #f3f4f6;
    clip-path: path('M6 76 Q-2 76 2 68 L38 12 Q46 0 62 0 H317 Q333 0 333 16 V60 Q333 76 317 76 Z');
  }
  .order-type {
    display: flex;
    gap: 36px;
    height: 71px;
    margin-top: 34px;
    padding-top: 16px;
    box-sizing: border-box;
    border-bottom: 2px solid #eeeff1;
    color: #8e8e93;
    font-size: 25px;
    line-height: 28px;
  }
  .order-type .on {
    height: 71px;
    box-sizing: border-box;
    margin-top: -16px;
    padding-top: 16px;
    border-bottom: 4px solid #16171a;
    color: #16171a;
  }
  .oco .small {
    margin-left: 6px;
    vertical-align: 2px;
  }
  .price-line {
    display: flex;
    gap: 17px;
    margin-top: 26px;
  }
  .field {
    display: flex;
    align-items: center;
    box-sizing: border-box;
    height: 83px;
    padding: 0 40px;
    border: 2px solid #eeeff1;
    border-radius: 18px;
    font-size: 25px;
  }
  .field.price { position: relative; width: 467px; padding-right: 0; }
  .f-val { margin-left: 67px; white-space: nowrap; font-size: 24px; letter-spacing: -0.500px; word-spacing: 2px; }
  .f-label { margin-top: -2px; }
  .f-unit { margin-right: -1px; margin-top: -1px; font-size: 23.500px; }
  .steps {
    display: flex;
    flex-direction: column;
    align-items: center;
    justify-content: space-between;
    box-sizing: border-box;
    width: 66px;
    height: 79px;
    margin-left: auto;
    padding: 9px 0 17px;
    border-left: 2px solid #eeeff1;
    background: linear-gradient(#eeeff1, #eeeff1) center 42px / 100% 2px no-repeat;
  }
  .bbo {
    display: flex;
    align-items: center;
    justify-content: center;
    box-sizing: border-box;
    width: 160px;
    height: 83px;
    border: 2px solid #eeeff1;
    border-radius: 18px;
    background: #f3f4f6;
    color: #8e8e93;
    font-weight: 600;
    font-size: 27px;
  }
  .bbo span { border-bottom: 2px dashed #c4c4c8; line-height: 28px; }
  .field.wide {
    justify-content: space-between;
    height: 82px;
    margin-top: 18px;
    border-color: #e6e7ea;
  }
  .slider {
    position: relative;
    height: 32px;
    margin-top: 29px;
  }
  .track {
    position: absolute;
    left: 5px;
    top: 8px;
    display: flex;
    justify-content: flex-end;
    gap: 138px;
    box-sizing: border-box;
    width: 619px;
    height: 16px;
    padding: 4px 6px 0 0;
    border-radius: 8px;
    background: #e8e9eb;
  }
  .track i {
    width: 8px;
    height: 8px;
    border-radius: 50%;
    background: #dcdde0;
  }
  .thumb {
    position: absolute;
    left: 4px;
    top: 0;
    box-sizing: border-box;
    width: 32px;
    height: 32px;
    border: 4px solid #c0c1c4;
    border-radius: 50%;
    background: #fff;
  }
  .marks {
    display: grid;
    grid-template-columns: 132px 146px 147px 125px auto;
    width: 605px;
    margin-top: 3px;
    margin-left: 20px;
    font-size: 24px;
    line-height: 30px;
    color: #8e8e93;
    white-space: nowrap;
  }
  .field.total { margin-top: 17px; }
  .tpsl {
    display: flex;
    align-items: center;
    height: 32px;
    margin-top: 23px;
  }
  .check {
    box-sizing: border-box;
    width: 32px;
    height: 32px;
    border: 2px solid #e6e7ea;
    border-radius: 6px;
  }
  .tp {
    margin-left: 17px;
    font-weight: 600;
    font-size: 23px;
    line-height: 28px;
    border-bottom: 2px dashed #dcdde0;
    padding-bottom: 2px;
  }
  .avail {
    display: flex;
    align-items: center;
    gap: 8px;
    height: 34px;
    margin-top: 32px;
    font-size: 25.500px;
  }
  .avail-icons {
    display: flex;
    gap: 22px;
    margin-left: auto;
    margin-right: 4px;
  }
  .login-btn {
    display: flex;
    align-items: center;
    justify-content: center;
    width: 644px;
    height: 84px;
    margin-top: 30px;
    padding-bottom: 2px;
    box-sizing: border-box;
    border-radius: 22px;
    background: #2fad50;
    color: #fff;
    font-size: 29px;
    font-weight: 500;
  }
  .tif {
    display: flex;
    align-items: center;
    width: 644px;
    height: 91px;
    padding-top: 28px;
    padding-bottom: 22px;
    box-sizing: border-box;
    border-bottom: 2px solid #eeeff1;
    font-size: 25px;
  }
  .gtc { margin-left: 8px; font-weight: 600; }
  .tif .tri { margin-left: 9px; border-left-width: 7px; border-right-width: 7px; }
  .info { margin-left: auto; margin-right: 2px; }

  /* overlays */
  .fade {
    position: absolute;
    left: 0;
    right: 0;
    bottom: 0;
    height: 90px;
    background: linear-gradient(rgba(0, 0, 0, 0), rgba(0, 0, 0, 0.09));
    pointer-events: none;
  }
  .chat {
    position: absolute;
    left: 2778px;
    top: 1382px;
    width: 128px;
    height: 128px;
    border-radius: 50%;
    background: #72984f;
    box-shadow: 0 8px 32px rgba(0, 0, 0, 0.12);
  }
  .pill {
    position: absolute;
    left: 34px;
    top: 46px;
    width: 60px;
    height: 30px;
    border-radius: 15px;
    background: #000;
  }
  .chat svg {
    position: absolute;
    left: 70px;
    top: 82px;
  }
</style>
